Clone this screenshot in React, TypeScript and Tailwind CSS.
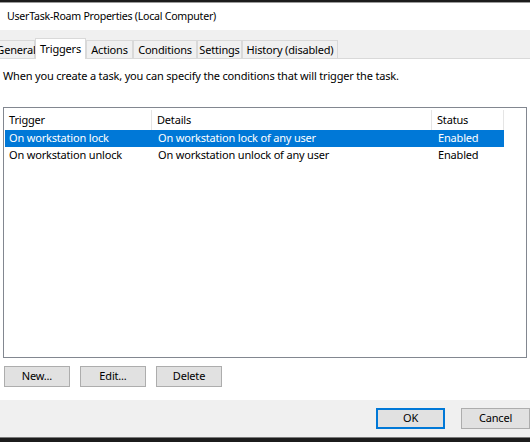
import React from "react";

const tabs = [
  { label: "General", w: 38 },
  { label: "Triggers", w: 51, active: true },
  { label: "Actions", w: 47 },
  { label: "Conditions", w: 64 },
  { label: "Settings", w: 45 },
  { label: "History (disabled)", w: 96 },
];

const rows = [
  { t: "On workstation lock", d: "On workstation lock of any user", s: "Enabled", sel: true },
  { t: "On workstation unlock", d: "On workstation unlock of any user", s: "Enabled" },
];

function Btn({ children, w = "w-[66px]", primary = false }: { children: React.ReactNode; w?: string; primary?: boolean }) {
  return (
    <div
      className={`${w} h-[21px] flex items-center justify-center bg-[#e1e1e1] border ${
        primary ? "border-[#0078d7] shadow-[inset_0_0_0_1px_#0078d7]" : "border-[#adadad]"
      } text-black`}
    >
      {children}
    </div>
  );
}

export default function App() {
  return (
    <div
      className="w-[530px] h-[442px] overflow-hidden flex flex-col bg-[#f0f0f0] text-[11px] tracking-[-0.18px] text-black"
      style={{ fontFamily: '"Noto Sans", "Open Sans", sans-serif' }}
    >
      <div className="h-[2px] bg-[#1c1c1c] shrink-0" />
      <div className="h-[1px] bg-[#9a9a9a] shrink-0" />
      <div className="h-[27px] bg-white shrink-0 flex items-center pl-[7px] text-[10.6px] tracking-[-0.25px]">
        UserTask-Roam Properties (Local Computer)
      </div>
      <div className="h-[8px] shrink-0" />
      <div className="h-[20px] shrink-0 flex items-end -ml-[3px] relative">
        {tabs.map((t) => (
          <div
            key={t.label}
            className={`flex justify-center whitespace-nowrap border-[#d9d9d9] border-t border-l border-r ${
              t.active
                ? "h-[21px] bg-white -mb-[1px] relative z-10 items-start pt-[2px]"
                : "h-[18px] bg-[#f0f0f0] items-center pt-[2px]"
            }`}
            style={{ width: t.w }}
          >
            {t.label}
          </div>
        ))}
      </div>
      <div className="flex-1 bg-white border-t border-[#d9d9d9] flex flex-col pl-[3px] pr-[3px]">
        <div className="h-[34px] flex items-center">
          When you create a task, you can specify the conditions that will trigger the task.
        </div>
        <div className="mt-[14px] h-[251px] border border-[#828790] flex flex-col pt-[2px] pl-[1px]">
          <div className="flex h-[20px] items-center w-[499px]">
            <div className="w-[147px] h-full flex items-center pl-[4px] border-r border-[#e5e5e5]">Trigger</div>
            <div className="w-[280px] h-full flex items-center pl-[5px] border-r border-[#e5e5e5]">Details</div>
            <div className="w-[72px] h-full flex items-center pl-[5px] border-r border-[#e5e5e5]">Status</div>
          </div>
          {rows.map((r) => (
            <div
              key={r.t}
              className={`flex h-[17px] items-center w-[499px] ${r.sel ? "bg-[#0078d7] text-white" : ""}`}
            >
              <div className="w-[147px] pl-[4px]">{r.t}</div>
              <div className="w-[280px] pl-[6px]">{r.d}</div>
              <div className="w-[72px] pl-[6px]">{r.s}</div>
            </div>
          ))}
        </div>
        <div className="flex gap-[10px] mt-[8px] pl-[1px]">
          <Btn>New...</Btn>
          <Btn>Edit...</Btn>
          <Btn>Delete</Btn>
        </div>
      </div>
      <div className="h-[37px] shrink-0 flex items-center pl-[376px] gap-[16px]">
        <Btn w="w-[75px]" primary>
          OK
        </Btn>
        <Btn w="w-[75px]">Cancel</Btn>
      </div>
      <div className="h-[1px] bg-[#7a7a7a] shrink-0" />
      <div className="h-[4px] bg-[#1c1c1c] shrink-0" />
    </div>
  );
}
